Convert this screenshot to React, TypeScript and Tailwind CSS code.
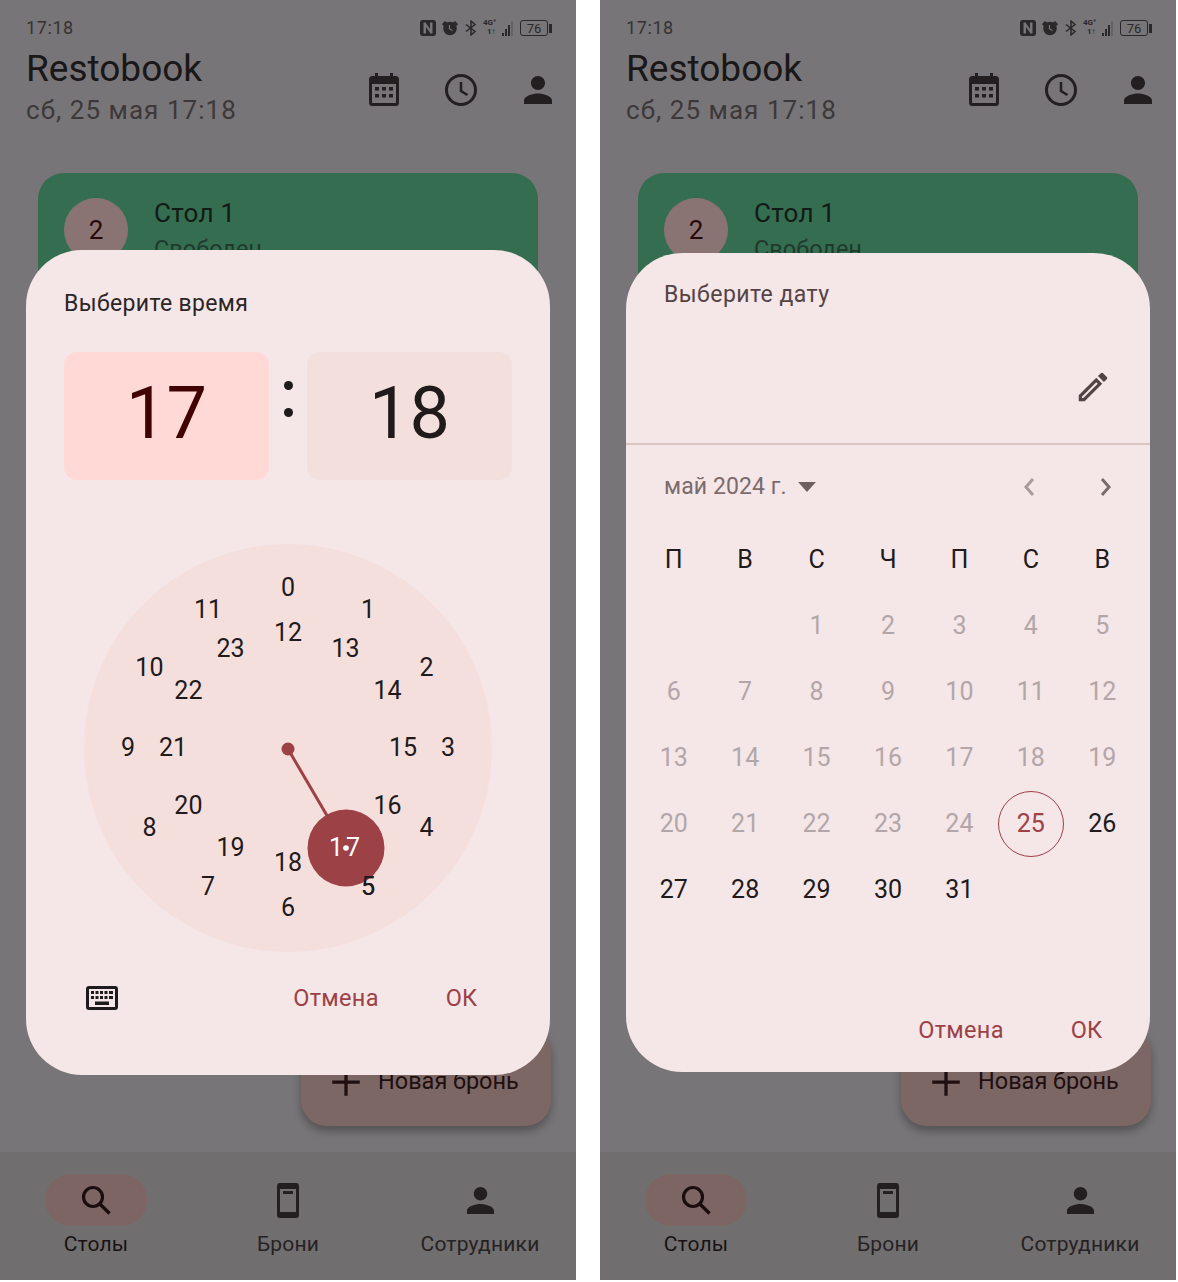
const font = { fontFamily: 'Roboto, "Noto Sans", sans-serif' }

function CalendarIcon({ className }: { className?: string }) {
  return (
    <svg viewBox="0 0 30 33" className={className} fill="currentColor">
      <path d="M6 0h3v3h12V0h3v3h2.500A3.500 3.500 0 0 1 30 6.500v23a3.500 3.500 0 0 1-3.500 3.500h-23A3.500 3.500 0 0 1 0 29.500v-23A3.500 3.500 0 0 1 3.500 3H6z" />
      <path fill="#777577" d="M3 11h24v18.500a.5.5 0 0 1-.5.5h-23a.5.5 0 0 1-.5-.5z" />
      <path d="M6 14h4v3.500H6zM13 14h4v3.500h-4zM20 14h4v3.500h-4zM6 21h4v3.500H6zM13 21h4v3.500h-4zM20 21h4v3.500h-4z" />
    </svg>
  )
}

function PersonIcon({ className }: { className?: string }) {
  return (
    <svg viewBox="4 4 16 16" className={className} fill="currentColor">
      <path d="M12 12c2.200 0 4-1.800 4-4s-1.800-4-4-4-4 1.800-4 4 1.800 4 4 4zm0 2c-2.700 0-8 1.300-8 4v2h16v-2c0-2.700-5.300-4-8-4z" />
    </svg>
  )
}

function StatusIcons() {
  return (
    <div className="flex items-center text-[#2b2829]">
      <svg viewBox="0 0 16 16" className="w-[16px] h-[16px] mr-[6px]" fill="currentColor">
        <path fillRule="evenodd" d="M3 0h10a3 3 0 0 1 3 3v10a3 3 0 0 1-3 3H3a3 3 0 0 1-3-3V3a3 3 0 0 1 3-3zm.500 2.500v11H6V7l4.500 6.500h2v-11H10V9L5.500 2.500z" />
      </svg>
      <svg viewBox="0 0 16 16" className="w-[16px] h-[16px] mr-[7px]" fill="currentColor">
        <circle cx="8" cy="8.500" r="6.800" />
        <path d="M0 4l3-3 2 1.500L1.500 6zM16 4l-3-3-2 1.500L14.500 6z" />
        <path d="M7.500 5v4l3 1.500" stroke="#777577" strokeWidth="1.200" fill="none" />
      </svg>
      <svg viewBox="0 0 12 16" className="w-[12px] h-[16px] mr-[6px]" fill="none" stroke="currentColor" strokeWidth="1.500">
        <path d="M1 4.500l9 7-4 3.500V1l4 3.500-9 7" />
      </svg>
      <div className="relative w-[30px] h-[16px] mr-[7px]">
        <span className="absolute left-0 top-[-1px] text-[8px] leading-[8px] font-bold">4G⁺</span>
        <span className="absolute left-[4px] top-[8px] text-[8px] leading-[8px] font-bold">1↑</span>
        <div className="absolute right-0 bottom-0 flex items-end gap-[1px]">
          <div className="w-[2px] h-[3px] bg-[#2b2829]" />
          <div className="w-[2px] h-[7px] bg-[#2b2829]" />
          <div className="w-[2px] h-[11px] bg-[#2b2829]" />
          <div className="w-[2px] h-[15px] bg-[#656264]" />
        </div>
      </div>
      <div className="w-[28px] h-[16px] border border-[#2b2829] rounded-[3px] flex items-center justify-center text-[13px] leading-none">76</div>
      <div className="w-[3px] h-[9px] ml-[1px] bg-[#2b2829]" />
    </div>
  )
}

function Backdrop() {
  return (
    <div className="absolute inset-0 flex flex-col bg-[#777577]">
      <div className="pl-[26px] pr-[24px] pt-[17px] flex items-center justify-between">
        <span className="text-[18px] leading-[22px] text-[#353233] tracking-[0.6px]">17:18</span>
        <StatusIcons />
      </div>
      <div className="pl-[26px] pr-[24px] flex items-start justify-between">
        <div>
          <div className="text-[37px] leading-[46px] mt-[7px] text-[#1a1718]">Restobook</div>
          <div className="text-[26px] leading-[32px] mt-[2px] text-[#3d3839] tracking-[1.05px]">сб, 25 мая 17:18</div>
        </div>
        <div className="flex items-center mt-[35px] text-[#231f20]">
          <CalendarIcon className="w-[30px] h-[33px] mr-[46px] mt-[-2px]" />
          <svg viewBox="0 0 32 32" className="w-[32px] h-[32px] mr-[47px]" fill="none" stroke="currentColor" strokeWidth="3">
            <circle cx="16" cy="16" r="14.500" />
            <path d="M16 8v9l6.500 4" strokeWidth="2.500" />
          </svg>
          <PersonIcon className="w-[28px] h-[28px]" />
        </div>
      </div>
      <div className="mx-[38px] mt-[47px] h-[200px] rounded-t-[26px] bg-[#356d50] flex pl-[26px] pt-[25px]">
        <div className="w-[64px] h-[64px] rounded-full bg-[#8a7473] flex items-center justify-center text-[26px] text-[#26090c]">2</div>
        <div className="ml-[26px]">
          <div className="text-[26px] leading-[30px] text-[#111a15] tracking-[0.3px]">Стол 1</div>
          <div className="text-[23.5px] leading-[30px] mt-[6px] text-[#1f3a2c]">Свободен</div>
        </div>
      </div>
      <div className="mt-auto">
        <div className="flex justify-end pr-[25px] mb-[26px]">
          <div className="w-[250px] h-[100px] rounded-[26px] bg-[#7c6764] shadow-[0_5px_8px_rgba(0,0,0,0.3)] flex items-center pl-[30px] pt-[11px]">
            <svg viewBox="0 0 24 24" className="w-[30px] h-[30px] text-[#1f0f10]" fill="none" stroke="currentColor" strokeWidth="2.600">
              <path d="M12 1v22M1 12h22" />
            </svg>
            <span className="ml-[17px] text-[23.5px] text-[#1f0f10]">Новая бронь</span>
          </div>
        </div>
        <div className="h-[128px] bg-[#716e6f] grid grid-cols-3 pt-[22px]">
          <div className="flex flex-col items-center">
            <div className="w-[102px] h-[52px] rounded-full bg-[#7c6563] flex items-center justify-center">
              <svg viewBox="0 0 30 30" className="w-[30px] h-[30px] text-[#1b0d0e]" fill="none" stroke="currentColor" strokeWidth="3.200">
                <circle cx="12" cy="12" r="9.500" />
                <path d="M19 19l9.500 9.500" />
              </svg>
            </div>
            <span className="text-[21px] leading-[26px] mt-[5px] text-[#171314] tracking-[0.2px]">Столы</span>
          </div>
          <div className="flex flex-col items-center">
            <div className="h-[52px] flex items-center">
              <svg viewBox="0 0 22 35" className="w-[24px] h-[35px] text-[#231f20]" fill="currentColor">
                <path fillRule="evenodd" d="M3 0h16a3 3 0 0 1 3 3v29a3 3 0 0 1-3 3H3a3 3 0 0 1-3-3V3a3 3 0 0 1 3-3zm0 6v23h16V6zm3 2h10v3H6z" />
              </svg>
            </div>
            <span className="text-[21px] leading-[26px] mt-[5px] text-[#262223] tracking-[0.2px]">Брони</span>
          </div>
          <div className="flex flex-col items-center">
            <div className="h-[52px] flex items-center">
              <PersonIcon className="w-[27px] h-[27px] text-[#231f20]" />
            </div>
            <span className="text-[21px] leading-[26px] mt-[5px] text-[#262223] tracking-[0.2px]">Сотрудники</span>
          </div>
        </div>
      </div>
    </div>
  )
}

function ClockNumber({ value, radius, step }: { value: number; radius: number; step: number }) {
  const angle = (step * 30 * Math.PI) / 180
  return (
    <span
      className="absolute w-[40px] h-[30px] -ml-[20px] -mt-[15px] flex items-center justify-center text-[25px] text-[#1f1a1b]"
      style={{ left: 204 + radius * Math.sin(angle), top: 204 - radius * Math.cos(angle) }}
    >
      {value}
    </span>
  )
}

function TimeDialog() {
  return (
    <div className="absolute left-[26px] right-[26px] top-[250px] h-[825px] rounded-[56px] bg-[#f5e6e8] px-[38px] pt-[39px]">
      <div className="text-[23px] leading-[30px] text-[#2b2526] tracking-[0.35px]">Выберите время</div>
      <div className="flex mt-[33px] items-center">
        <div className="w-[205px] h-[128px] rounded-[13px] bg-[#ffd9d6] flex items-center justify-center pb-[4px] text-[72px] text-[#410002]">17</div>
        <div className="w-[38px] flex flex-col items-center gap-[18px] mt-[-34px]">
          <div className="w-[9px] h-[9px] rounded-full bg-[#201a1b]" />
          <div className="w-[9px] h-[9px] rounded-full bg-[#201a1b]" />
        </div>
        <div className="w-[205px] h-[128px] rounded-[13px] bg-[#f3e0dd] flex items-center justify-center pb-[4px] text-[72px] text-[#201a1b]">18</div>
      </div>
      <div className="relative w-[408px] h-[408px] mt-[64px] ml-[20px] rounded-full bg-[#f5dfdc]">
        {[...Array(12)].map((_, i) => (
          <ClockNumber key={i} value={i} radius={160} step={i} />
        ))}
        {[...Array(12)].map((_, i) => (
          <ClockNumber key={i} value={i + 12} radius={115} step={i} />
        ))}
        <svg viewBox="0 0 408 408" className="absolute inset-0 w-[408px] h-[408px]">
          <circle cx="204" cy="205" r="6.500" fill="#9c4146" />
          <path d="M204 205L262 304" stroke="#9c4146" strokeWidth="3" />
          <circle cx="262" cy="304" r="38.500" fill="#9c4146" />
          <circle cx="262" cy="304" r="2.800" fill="#fff" />
        </svg>
        <span className="absolute left-[242px] top-[289px] w-[40px] h-[30px] flex items-center justify-center text-[25px] text-white tracking-[3px]">17</span>
        <span className="absolute left-[264px] top-[328px] w-[40px] h-[30px] flex items-center justify-center text-[25px] text-[#1f1a1b]">5</span>
      </div>
      <div className="flex items-center mt-[31px] ml-[22px]">
        <svg viewBox="0 0 32 24" className="w-[32px] h-[24px] text-[#1f1a1b]" fill="currentColor">
          <path fillRule="evenodd" d="M3 0h26a3 3 0 0 1 3 3v18a3 3 0 0 1-3 3H3a3 3 0 0 1-3-3V3a3 3 0 0 1 3-3zm0 3v18h26V3zm2 2h3v3H5zm4.500 0h3v3h-3zm4.500 0h3v3h-3zm4.500 0h3v3h-3zm4.500 0h4v3h-4zM5 10h3v3H5zm4.500 0h3v3h-3zm4.500 0h3v3h-3zm4.500 0h3v3h-3zm4.500 0h4v3h-4zM9 15.500h14V19H9z" />
        </svg>
        <span className="ml-auto mr-[67px] text-[23.5px] leading-[30px] text-[#9c4146] tracking-[0.3px]">Отмена</span>
        <span className="mr-[35px] text-[23.5px] leading-[30px] text-[#9c4146]">ОК</span>
      </div>
    </div>
  )
}

const weekDays = ['П', 'В', 'С', 'Ч', 'П', 'С', 'В']

function DateDialog() {
  const cells: (number | null)[] = [null, null, ...Array.from({ length: 31 }, (_, i) => i + 1)]
  return (
    <div className="absolute left-[26px] right-[26px] top-[253px] h-[819px] rounded-[56px] bg-[#f5e6e8] flex flex-col">
      <div className="h-[192px] border-b-2 border-[#d8c5c3] px-[38px] pt-[27px] relative">
        <div className="text-[23px] leading-[30px] text-[#534344] tracking-[0.45px]">Выберите дату</div>
        <svg viewBox="0 0 24 24" className="absolute right-[38px] top-[115px] w-[38px] h-[38px] text-[#524345]" fill="currentColor">
          <path d="M3 17.250V21h3.750L17.810 9.940l-3.750-3.750L3 17.250zM5.920 19H5v-.920l9.060-9.060.920.920L5.920 19zM20.710 7.040a1 1 0 0 0 0-1.410l-2.340-2.340a1 1 0 0 0-1.410 0l-1.830 1.830 3.750 3.750 1.830-1.830z" />
        </svg>
      </div>
      <div className="flex items-center pl-[38px] pr-[38px] h-[84px] text-[#7a6b6c]">
        <span className="text-[23px] tracking-[0.1px]">май 2024 г.</span>
        <svg viewBox="0 0 16 9" className="w-[18px] h-[10px] ml-[11px] text-[#6e5f60]" fill="currentColor">
          <path d="M0 0h16L8 9z" />
        </svg>
        <svg viewBox="0 0 12 20" className="ml-auto w-[12px] h-[20px] text-[#a99a9b]" fill="none" stroke="currentColor" strokeWidth="3">
          <path d="M10 2L3 10l7 8" />
        </svg>
        <svg viewBox="0 0 12 20" className="ml-[65px] w-[12px] h-[20px] text-[#7a6b6c]" fill="none" stroke="currentColor" strokeWidth="3">
          <path d="M2 2l7 8-7 8" />
        </svg>
      </div>
      <div className="grid grid-cols-7 px-[12px] mt-[-2px] auto-rows-[66px]">
        {weekDays.map((d, i) => (
          <div key={i} className="flex items-center justify-center text-[25px] text-[#201a1b]">{d}</div>
        ))}
        {cells.map((d, i) => (
          <div key={i} className="flex items-center justify-center">
            {d === 25 ? (
              <div className="w-[66px] h-[66px] rounded-full border border-[#9c4146] flex items-center justify-center text-[25px] text-[#9c4146]">{d}</div>
            ) : (
              <span className={d !== null && d > 25 ? 'text-[25px] text-[#201a1b]' : 'text-[25px] text-[#b3a6a8]'}>{d}</span>
            )}
          </div>
        ))}
      </div>
      <div className="mt-auto flex justify-end items-center pr-[48px] pb-[24px]">
        <span className="text-[23.5px] leading-[36px] text-[#9c4146] tracking-[0.3px]">Отмена</span>
        <span className="ml-[67px] text-[23.5px] leading-[36px] text-[#9c4146]">ОК</span>
      </div>
    </div>
  )
}

export default function App() {
  return (
    <div className="w-[1178px] h-[1282px] bg-white flex gap-[24px]" style={font}>
      <div className="relative w-[576px] h-[1280px] overflow-hidden">
        <Backdrop />
        <TimeDialog />
      </div>
      <div className="relative w-[576px] h-[1280px] overflow-hidden">
        <Backdrop />
        <DateDialog />
      </div>
    </div>
  )
}
